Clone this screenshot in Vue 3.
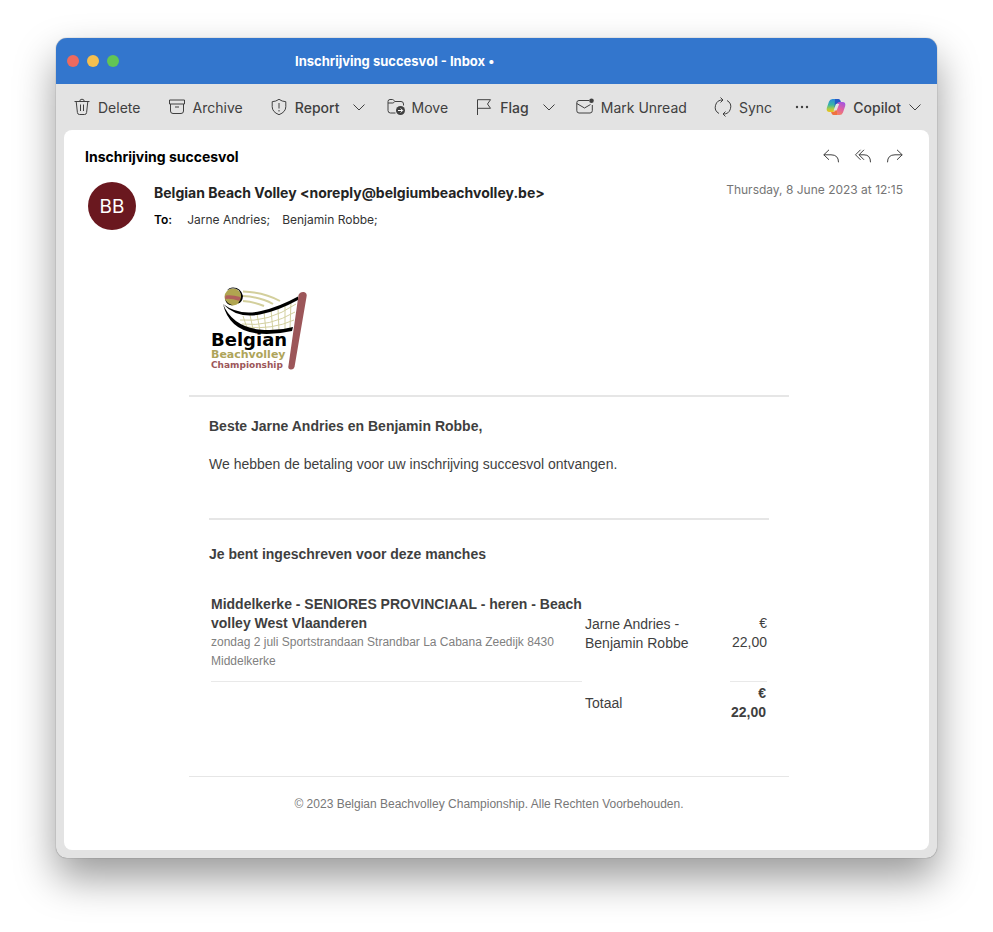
<template>
  <main class="window">
    <header class="titlebar">
      <div class="lights">
        <button class="light red" aria-label="Close"></button>
        <button class="light yellow" aria-label="Minimize"></button>
        <button class="light green" aria-label="Zoom"></button>
      </div>
      <h1>Inschrijving succesvol - Inbox •</h1>
    </header>

    <nav class="toolbar">
      <button class="tool">
        <svg class="icon" viewBox="0 0 18 18">
          <path d="M1.5 3.5h15M3.2 3.5l1.2 11q.2 2 2 2h5.2q1.8 0 2-2l1.2-11M6.7 3.5q0-2.3 2.3-2.3t2.3 2.3M7.5 6.5v6.5M10.5 6.5v6.5" />
        </svg>
        Delete
      </button>
      <button class="tool">
        <svg class="icon" viewBox="0 0 18 18">
          <path d="M1.5 2h15v4h-15zM2.5 6v7q0 2.500 2.500 2.500h8q2.500 0 2.500-2.500V6M7 9h4" />
        </svg>
        Archive
      </button>
      <button class="tool strong split">
        <svg class="icon" viewBox="0 0 18 18">
          <path d="M9 1.3q3 2.2 6.8 2.4v5q0 5.3-6.8 8-6.8-2.7-6.8-8v-5Q6 3.500 9 1.300zM9 5v5.500M9 12v1.500" />
        </svg>
        Report
        <svg class="chevron" viewBox="0 0 12 12"><path d="M.5 3.500 6 9l5.500-5.500" /></svg>
      </button>
      <button class="tool">
        <svg class="icon" viewBox="0 0 18 18">
          <path d="M8.500 15H3.500Q1 15 1 12.500V3.500Q1 1.500 3 1.500h2.500q1 0 1.500 1l.8 1h6.200q2.500 0 2.500 2.500v1.500M1 5h4.800q1 0 2-1.500" />
          <circle class="solid" cx="13.500" cy="12.500" r="4.500" />
          <path class="light-line" d="M11 12.500h4.500M13.700 10.500l2 2-2 2" />
        </svg>
        Move
      </button>
      <button class="tool strong split">
        <svg class="icon" viewBox="0 0 18 18">
          <path d="M2.500 17V1.700h13l-3 4.300 3 4.300h-13" />
        </svg>
        Flag
        <svg class="chevron" viewBox="0 0 12 12"><path d="M.5 3.500 6 9l5.500-5.500" /></svg>
      </button>
      <button class="tool">
        <svg class="icon" viewBox="0 0 18 18">
          <path d="M13 2.500H3Q.8 2.500.8 4.700v8Q.8 15 3 15h11q2.300 0 2.300-2.300V7M.8 5.500 8.500 10l6-3.500" />
          <circle class="solid" cx="15.500" cy="2.800" r="2.300" />
        </svg>
        Mark Unread
      </button>
      <button class="tool">
        <svg class="icon" viewBox="0 0 18 18">
          <path d="M5 15.500A7.200 7.200 0 0 1 8.800 2M6.500-.5l2.500 2.500-2.500 2.500M13 2.500A7.200 7.200 0 0 1 9.200 16M11.500 18.500 9 16l2.500-2.500" />
        </svg>
        Sync
      </button>
      <button class="tool more" aria-label="More">
        <svg class="dots" viewBox="0 0 14 4">
          <circle cx="2" cy="2" r="1.200" /><circle cx="7" cy="2" r="1.200" /><circle cx="12" cy="2" r="1.200" />
        </svg>
      </button>
      <button class="tool strong split">
        <svg class="copilot" viewBox="0 0 20 18">
          <defs>
            <linearGradient id="cp-left" x1="0" y1="0" x2="0" y2="1">
              <stop offset="0" stop-color="#2a8bdc" />
              <stop offset=".45" stop-color="#38b5a5" />
              <stop offset=".75" stop-color="#a7cc46" />
              <stop offset="1" stop-color="#f4c11b" />
            </linearGradient>
            <linearGradient id="cp-right" x1=".7" y1="0" x2=".3" y2="1">
              <stop offset="0" stop-color="#a455e0" />
              <stop offset=".5" stop-color="#df61a0" />
              <stop offset="1" stop-color="#f6855d" />
            </linearGradient>
          </defs>
          <path fill="url(#cp-left)" d="M6.500 1h6L9 12q-.6 2-2.500 2H3.500Q0 14 .8 10L3 3.500Q4 1 6.500 1z" />
          <path fill="#2457c7" d="M9 1h3.500q1.500 0 2 1.800l.7 2.200H12q-1.800 0-2.400 1.800L8.500 10z" />
          <path fill="url(#cp-right)" d="M13.500 17h-6L11 6q.6-2 2.500-2h3Q20 4 19.200 8L17 14.500Q16 17 13.500 17z" />
          <path fill="#f0713f" d="M11 17H7.500Q6 17 5.500 15.200L5.100 14h2.400q1.500 0 2.100-1.800L11 8z" />
          <path fill="#e3e3e3" d="M10 6h3.200l-2.600 6.500H7.600z" />
        </svg>
        Copilot
        <svg class="chevron" viewBox="0 0 12 12"><path d="M.5 3.500 6 9l5.500-5.500" /></svg>
      </button>
    </nav>

    <article class="message">
      <div class="subject-row">
        <h2>Inschrijving succesvol</h2>
        <div class="actions">
          <button aria-label="Reply">
            <svg class="reply" viewBox="0 0 16 14"><path d="M6 .8.8 5.800l5.200 5M.8 5.800H8q7.500 0 7.500 7.500" /></svg>
          </button>
          <button aria-label="Reply all">
            <svg class="reply" viewBox="0 0 16 14"><path d="M5.500.8.500 5.800l5 5M9 .8l-5 5 5 5M4 5.800h5q6.500 0 6.500 7.500" /></svg>
          </button>
          <button aria-label="Forward">
            <svg class="reply" viewBox="0 0 16 14"><path d="m10 .8 5.200 5-5.200 5M15.200 5.800H8Q.5 5.800.5 13.300" /></svg>
          </button>
        </div>
      </div>

      <div class="sender-row">
        <div class="avatar">BB</div>
        <div class="sender">
          <div class="from">Belgian Beach Volley &lt;noreply@belgiumbeachvolley.be&gt;</div>
          <div class="to">
            <b>To:</b>
            <span v-for="name in recipients" :key="name">{{ name }};</span>
          </div>
        </div>
        <time datetime="2023-06-08T12:15">Thursday, 8 June 2023 at 12:15</time>
      </div>

      <div class="mail">
        <div class="mail-head">
          <svg class="logo" viewBox="0 0 100 90" role="img" aria-label="Belgian Beachvolley Championship">
            <g class="rays">
              <path d="M34 7.500Q55 8 71 17" />
              <path d="M34 12Q52 13 64 20" />
              <path d="M34 17Q46 18 55 22" />
            </g>
            <g class="net">
              <path d="M31 36q28 3 56-16M33 40q28 3 53-12M37 43q26 3 48-7M34 32l4 12M41 31l3 14M48 30l3 17M55 28l2 19M62 26l2 21M69 24l1 23M76 20v26M82 17l-1 28" />
            </g>
            <path class="band" d="M14 20Q30 32 52 27 70 23 89 12.500V16Q69 27 51 30.500 28 35 14 20z" />
            <path class="band" d="M14 20Q23 42 50 45.500q18 2 34-2.500l-1 4Q66 51 48 49.500 20 46 14 20z" />
            <circle class="ball" cx="24" cy="13" r="8.500" />
            <path class="ball-stripe" d="M16.500 11.500q6-1 15 1.500l-1 4Q22 14 16 15z" />
            <path class="ball-shade" d="M18 6.500Q24 2 30 6.500q4.500 6-1 13 4.500-1 5-7.500Q32 3.500 24 3.500q-4 0-6 3zM16 15q2 4.500 8 6.500-6.500 0-8-6.500z" />
            <path class="post" d="M89.500 11Q91 7.500 95 8q3.500 1 2.500 5L85.500 83q-1 3-4 2.500t-2-4z" />
            <text class="word black" x="2" y="62">Belgian</text>
            <text class="word gold" x="2" y="74">Beachvolley</text>
            <text class="word rose" x="2" y="84">Championship</text>
          </svg>
        </div>

        <div class="mail-body">
          <p class="greeting">Beste Jarne Andries en Benjamin Robbe,</p>
          <p class="intro">We hebben de betaling voor uw inschrijving succesvol ontvangen.</p>
          <hr />
          <h3>Je bent ingeschreven voor deze manches</h3>
          <table>
            <tbody>
              <tr v-for="item in items" :key="item.title" class="item">
                <td class="event">
                  <b>{{ item.title }}</b>
                  <small>{{ item.place }}</small>
                </td>
                <td class="team">{{ item.team }}</td>
                <td class="price">€ {{ item.price }}</td>
              </tr>
              <tr class="total">
                <td></td>
                <td>Totaal</td>
                <td class="price">€ 22,00</td>
              </tr>
            </tbody>
          </table>
        </div>

        <footer>© 2023 Belgian Beachvolley Championship. Alle Rechten Voorbehouden.</footer>
      </div>
    </article>
  </main>
</template>

<script setup>
const recipients = ['Jarne Andries', 'Benjamin Robbe']

const items = [
  {
    title: 'Middelkerke - SENIORES PROVINCIAAL - heren - Beach volley West Vlaanderen',
    place: 'zondag 2 juli Sportstrandaan Strandbar La Cabana Zeedijk 8430 Middelkerke',
    team: 'Jarne Andries - Benjamin Robbe',
    price: '22,00',
  },
]
</script>

<style>
body {
  margin: 0;
  background: #fff;
}
</style>

<style scoped>
.window {
  margin: 38px 56px 74px;
  padding-bottom: 8px;
  border-radius: 11px;
  background: #e3e3e3;
  box-shadow: 0 0 1px rgba(0, 0, 0, 0.6), 0 20px 40px rgba(0, 0, 0, 0.4);
  font-family: Inter, "Liberation Sans", sans-serif;
  color: #242424;
}
button {
  padding: 0;
  border: 0;
  background: none;
  font: inherit;
  color: inherit;
}
svg {
  display: block;
  flex: none;
  overflow: visible;
}

.titlebar {
  display: flex;
  align-items: center;
  height: 46px;
  padding: 0 11px;
  border-radius: 11px 11px 0 0;
  background: #3376cd;
}
.lights { display: flex; gap: 8px; width: 228px; }
.light { width: 12px; height: 12px; border-radius: 50%; }
.red { background: #ed6a5f; }
.yellow { background: #f5bf4f; }
.green { background: #62c554; }
.titlebar h1 {
  margin: 0;
  font-size: 13px;
  font-weight: 700;
  color: #fff;
}

.toolbar {
  display: flex;
  align-items: center;
  justify-content: space-between;
  height: 46px;
  padding: 0 16px 0 17px;
  font-size: 14px;
  color: #404040;
}
.tool {
  display: flex;
  align-items: center;
  gap: 7px;
  padding-right: 6px;
  white-space: nowrap;
}
.tool.split { padding-right: 0; }
.tool.more { padding: 0; margin: 0 -4px; }
.strong { font-weight: 500; }
.icon { width: 18px; height: 18px; }
.icon path, .chevron path, .reply path {
  fill: none;
  stroke: #404040;
  stroke-width: 1;
  stroke-linejoin: round;
}
.icon .light-line { stroke: #fff; }
.solid, .dots { fill: #404040; }
.chevron { width: 12px; height: 12px; margin-left: 7px; }
.dots { width: 14px; height: 4px; }
.copilot { width: 20px; height: 18px; }
.copilot ~ .chevron { margin-left: 1px; }

.message {
  margin: 0 8px;
  padding: 14px 26px 36px 21px;
  border-radius: 8px;
  background: #fff;
}
.subject-row {
  display: flex;
  align-items: center;
  justify-content: space-between;
  height: 24px;
}
.subject-row h2 {
  margin: 0;
  font-size: 14px;
  font-weight: 700;
  color: #000;
}
.actions { display: flex; gap: 16px; }
.reply { width: 16px; height: 14px; }
.sender-row {
  display: flex;
  padding: 14px 0 0 3px;
}
.avatar {
  display: flex;
  align-items: center;
  justify-content: center;
  width: 48px;
  height: 48px;
  border-radius: 50%;
  background: #6a181f;
  font-size: 19px;
  color: #fff;
}
.sender { margin-left: 18px; }
.from {
  font-size: 14px;
  line-height: 22px;
  font-weight: 700;
}
.to {
  display: flex;
  gap: 12px;
  margin-top: 7px;
  font-size: 12px;
  line-height: 18px;
  color: #333;
}
.to b { font-weight: 600; margin-right: 3px; color: #000; }
time {
  margin-left: auto;
  font-size: 12px;
  line-height: 16px;
  color: #757575;
}

.mail {
  max-width: 600px;
  margin: 54px auto 0;
  padding-right: 10px;
  font-family: "Liberation Sans", Arial, sans-serif;
  font-size: 14px;
  line-height: 19px;
  color: #3f3f3f;
}
.mail-head {
  padding: 0 20px 21px;
  border-bottom: 2px solid #e6e6e6;
}
.logo { width: 100px; height: 90px; }
.rays path { fill: none; stroke: #d3cf9c; stroke-width: 2; }
.net path { fill: none; stroke: #d3d0a0; stroke-width: 1; }
.ball { fill: #b0a550; }
.ball-stripe { fill: #b0605c; }
.post, .rose { fill: #9c5659; }
.word {
  font-family: "DejaVu Sans", sans-serif;
  font-weight: 700;
}
.black { font-size: 18px; fill: #000; }
.gold { font-size: 11px; fill: #aea45a; }
.rose.word { font-size: 9px; }

.mail-body { padding: 20px 20px 52px; }
.mail-body p { margin: 0; }
.greeting { font-weight: 700; }
.mail-body .intro { margin-top: 19px; }
hr {
  margin: 44px 0 25px;
  border: 0;
  border-top: 2px solid #e6e6e6;
}
h3 {
  margin: 0 0 29px;
  font-size: 14px;
  font-weight: 700;
}
table {
  width: 100%;
  border-spacing: 2px;
  table-layout: fixed;
}
td { padding: 0; }
.event { width: 371px; }
.price { width: 37px; text-align: right; }
.item td { padding-bottom: 10px; }
.item .event, .item .price { border-bottom: 1px solid #e9e9e9; }
.item .team { padding: 0 20px 10px 1px; }
small { display: block; font-size: 12px; color: #808080; }
.total td { padding: 0 1px; }
.total .price { font-weight: 700; }

footer {
  padding-top: 18px;
  border-top: 1px solid #e6e6e6;
  font-size: 12px;
  text-align: center;
  color: #777;
}
</style>
